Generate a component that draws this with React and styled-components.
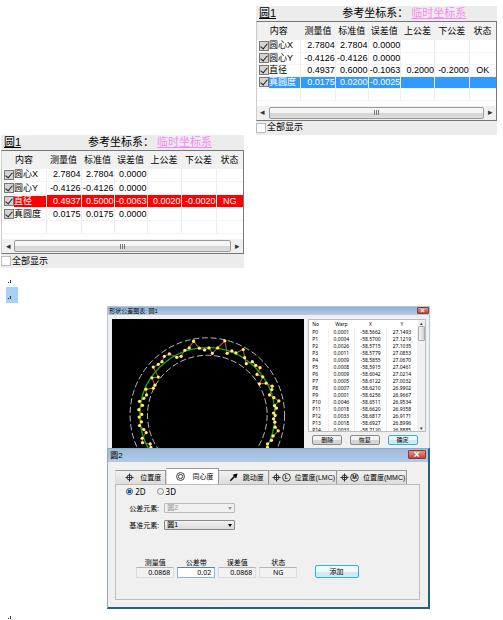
import React, { useState } from "react";
import styled, { createGlobalStyle, css } from "styled-components";

const columns = ["内容", "测量值", "标准值", "误差值", "上公差", "下公差", "状态"];

const firstRows = [
    ["圆心X", "2.7804", "2.7804", "0.0000", "", "", ""],
    ["圆心Y", "-0.4126", "-0.4126", "0.0000", "", "", ""],
    ["直径", "0.4937", "0.6000", "-0.1063", "0.2000", "-0.2000", "OK"],
    ["真圆度", "0.0175", "0.0200", "-0.0025", "", "", ""],
];

const secondRows = [
    ["圆心X", "2.7804", "2.7804", "0.0000", "", "", ""],
    ["圆心Y", "-0.4126", "-0.4126", "0.0000", "", "", ""],
    ["直径", "0.4937", "0.5000", "-0.0063", "0.0020", "-0.0020", "NG"],
    ["真圆度", "0.0175", "0.0175", "0.0000", "", "", ""],
];

const warpRows = [
    ["P0", "0.0001", "-58.5662", "27.1493"],
    ["P1", "0.0004", "-58.5700", "27.1219"],
    ["P2", "0.0026", "-58.5715", "27.1035"],
    ["P3", "0.0011", "-58.5779", "27.0853"],
    ["P4", "0.0009", "-58.5855", "27.0670"],
    ["P5", "0.0008", "-58.5915", "27.0461"],
    ["P6", "0.0009", "-58.6042", "27.0214"],
    ["P7", "0.0005", "-58.6122", "27.0032"],
    ["P8", "0.0007", "-58.6210", "26.9902"],
    ["P9", "0.0001", "-58.6256", "26.9667"],
    ["P10", "0.0046", "-58.6511", "26.9534"],
    ["P11", "0.0018", "-58.6620", "26.9358"],
    ["P12", "0.0033", "-58.6817", "26.9171"],
    ["P13", "0.0018", "-58.6927", "26.8996"],
    ["P14", "0.0033", "-58.7120", "26.8885"],
];

const points = [
    [155, 442], [153, 432], [130, 428], [129, 415], [141, 398], [134, 389], [121, 377], [127, 366],
    [120, 352], [128, 344], [119, 330], [130, 317], [121, 305], [134, 296], [142, 286], [140, 269],
    [162, 266], [167, 257], [158, 235], [177, 233], [162, 203], [177, 195], [188, 187], [195, 171],
    [210, 164], [232, 174], [245, 171], [256, 153], [269, 146], [282, 126], [299, 147], [315, 152],
    [328, 146], [338, 162], [354, 146], [375, 125], [382, 162], [396, 155], [408, 161], [430, 151],
    [434, 175], [439, 193], [457, 187], [467, 198], [480, 205], [471, 225], [488, 232], [478, 253],
    [498, 251], [516, 260], [515, 270], [508, 286], [521, 294], [536, 304], [523, 318], [529, 325],
    [520, 340], [525, 347], [520, 357], [524, 367], [525, 382], [534, 393], [519, 408], [514, 421],
    [502, 432], [502, 442],
];

const tabs = [
    { label: "位置度", icons: ["position"], share: 51 },
    { label: "同心度", icons: ["concentric"], share: 52 },
    { label: "跳动度", icons: ["runout"], share: 50 },
    { label: "位置度(LMC)", icons: ["position", "L"], share: 68 },
    { label: "位置度(MMC)", icons: ["position", "M"], share: 70 },
];

const TabIcon = ({ kind }) => (
    <Icon viewBox="0 0 10 10" aria-hidden="true">
        {kind === "position" && (
            <g fill="none" stroke="#222">
                <circle cx="5" cy="5" r="2.8" />
                <path d="M5 0.5v9M0.5 5h9" />
            </g>
        )}
        {kind === "concentric" && (
            <g fill="none" stroke="#333">
                <circle cx="5" cy="5" r="4.4" />
                <circle cx="5" cy="5" r="2.4" />
            </g>
        )}
        {kind === "runout" && (
            <g>
                <path d="M1.5 8.5L6 4" stroke="#000" strokeWidth="1.6" />
                <path d="M9.5 0.5L8 6L4 2z" fill="#000" />
            </g>
        )}
        {(kind === "L" || kind === "M") && (
            <g>
                <circle cx="5" cy="5" r="4.3" fill="none" stroke="#000" strokeWidth="0.8" />
                <text x="5" y="7.2" textAnchor="middle" fontSize="6" fontWeight="bold" fontFamily="Liberation Sans, sans-serif">{kind}</text>
            </g>
        )}
    </Icon>
);

const Mark = () => (
    <MarkSvg viewBox="0 0 5 5" aria-hidden="true">
        <path d="M1 3.5h1M3.5 1v3" stroke="#333" />
    </MarkSvg>
);

const ResultPanel = ({ id, rows, active, tone, rowHeight, headHeight, right }) => (
    <Panel $right={right}>
        <PanelTitle>
            <Name>圆1</Name>
            <span>参考坐标系：</span>
            <SystemLink href="#system">临时坐标系</SystemLink>
        </PanelTitle>
        <Frame>
            <Table>
                <colgroup>
                    <Col $share={44} />
                    <Col $share={35} />
                    <Col $share={33} />
                    <Col $share={33} />
                    <Col $share={34} />
                    <Col $share={35} />
                    <Col $share={27} />
                </colgroup>
                <thead>
                    <tr>
                        {columns.map((c) => <Th key={c} $height={headHeight}>{c}</Th>)}
                    </tr>
                </thead>
                <tbody>
                    {rows.map((row, i) => (
                        <Row key={row[0]} $height={rowHeight} $tone={i === active ? tone : null}>
                            <td>
                                <CheckLabel>
                                    <Check type="checkbox" defaultChecked />
                                    <Feature $tone={i === active ? tone : null}>{row[0]}</Feature>
                                </CheckLabel>
                            </td>
                            {row.slice(1).map((v, n) => <td key={n}>{v}</td>)}
                        </Row>
                    ))}
                    <Row $height={rowHeight}>{columns.map((c) => <td key={c} />)}</Row>
                </tbody>
            </Table>
            <ScrollX>
                <ScrollButton type="button" aria-label="left">◂</ScrollButton>
                <ThumbX><i /><i /><i /></ThumbX>
                <ScrollButton type="button" aria-label="right">▸</ScrollButton>
            </ScrollX>
        </Frame>
        <Footer htmlFor={id}>
            <Check id={id} type="checkbox" $plain />
            全部显示
        </Footer>
    </Panel>
);

const ChartWindow = () => (
    <Chart>
        <ChartBar>
            <span>形状公差图表: 圆1</span>
            <Close type="button" aria-label="close" $small>×</Close>
        </ChartBar>
        <ChartBody>
            <Plot viewBox="36 60 578 384" preserveAspectRatio="xMidYMin slice">
                <g fill="none">
                    <circle cx="323" cy="346" r="230" stroke="#ddd" strokeWidth="2.5" strokeDasharray="18 8" />
                    <circle cx="323" cy="346" r="178" stroke="#ddd" strokeWidth="2.5" strokeDasharray="18 8" />
                    <circle cx="323" cy="346" r="201" stroke="#0aa81c" strokeWidth="4" />
                    <polyline points={points.join(" ")} stroke="#c0582c" strokeWidth="3" />
                </g>
                {points.map(([x, y]) => <circle key={x + "-" + y} cx={x} cy={y} r="4.8" fill="#fff06a" />)}
            </Plot>
            <Side>
                <List>
                    <WarpTable>
                        <thead>
                            <tr><th>No</th><th>Warp</th><th>X</th><th>Y</th></tr>
                        </thead>
                        <tbody>
                            {warpRows.map((row) => (
                                <tr key={row[0]}>{row.map((v) => <td key={v}>{v}</td>)}</tr>
                            ))}
                        </tbody>
                    </WarpTable>
                    <ScrollY>
                        <ScrollButton type="button" aria-label="up" $tiny>▴</ScrollButton>
                        <ThumbY />
                        <ScrollButton type="button" aria-label="down" $tiny>▾</ScrollButton>
                    </ScrollY>
                </List>
                <Actions>
                    <Button type="button">删除</Button>
                    <Button type="button">恢复</Button>
                    <Button type="button" $primary>确定</Button>
                </Actions>
            </Side>
        </ChartBody>
    </Chart>
);

const ToleranceWindow = () => {
    const [tab, setTab] = useState(1);
    return (
        <Dialog>
            <DialogBar>
                <span>圆2</span>
                <Close type="button" aria-label="close">×</Close>
            </DialogBar>
            <DialogBody>
                <Tabs role="tablist">
                    {tabs.map((t, i) => (
                        <Tab key={t.label} type="button" role="tab" aria-selected={i === tab} $active={i === tab} $share={t.share} $wide={t.icons.length > 1} onClick={() => setTab(i)}>
                            <Icons>{t.icons.map((k) => <TabIcon key={k} kind={k} />)}</Icons>
                            {t.label}
                        </Tab>
                    ))}
                </Tabs>
                <TabPage>
                    <Radios>
                        <label><Radio type="radio" name="dim" defaultChecked />2D</label>
                        <label><Radio type="radio" name="dim" />3D</label>
                    </Radios>
                    <Line>
                        <label htmlFor="target">公差元素:</label>
                        <SelectBox $disabled>
                            <Select id="target" disabled><option>圆2</option></Select>
                        </SelectBox>
                    </Line>
                    <Line>
                        <label htmlFor="datum">基准元素:</label>
                        <SelectBox>
                            <Select id="datum"><option>圆1</option></Select>
                        </SelectBox>
                    </Line>
                    <Results>
                        <Field>测量值<Value readOnly value="0.0868" /></Field>
                        <Field>公差带<Value $edit defaultValue="0.02" /></Field>
                        <Field>误差值<Value readOnly value="0.0868" /></Field>
                        <Field>状态<Value $center readOnly value="NG" /></Field>
                        <Button type="button" $primary $large>添加</Button>
                    </Results>
                </TabPage>
            </DialogBody>
        </Dialog>
    );
};

const App = () => {
    return (
        <Page>
            <GlobalStyle />
            <ResultPanel id="all-1" rows={firstRows} active={3} tone="#3399ff" rowHeight={12} headHeight={18} right />
            <ResultPanel id="all-2" rows={secondRows} active={2} tone="#ff0000" rowHeight={13} headHeight={18} />
            <Paragraph><Mark /></Paragraph>
            <Selected><Mark /></Selected>
            <Figure>
                <ChartWindow />
                <ToleranceWindow />
            </Figure>
            <Paragraph $tight><Mark /></Paragraph>
        </Page>
    );
};

export default App;

const GlobalStyle = createGlobalStyle`
* {
    box-sizing: border-box;
}
body {
    margin: 0;
    background: #fff;
    color: #000;
    font-family: "Liberation Sans", "Noto Sans CJK SC", sans-serif;
}
button, input, select {
    font: inherit;
    color: inherit;
    margin: 0;
    padding: 0;
}
`;

const Page = styled.main`
display: flex;
flex-direction: column;
padding: 6px 6px 0 1px;
`;

const Panel = styled.section`
width: ${(p) => (p.$right ? "calc(49% - 2px)" : "49%")};
align-self: ${(p) => (p.$right ? "flex-end" : "flex-start")};
background: #ececec;
`;

const PanelTitle = styled.header`
display: flex;
height: 15px;
padding-left: 3px;
font-size: 11px;
line-height: 14px;
white-space: nowrap;
`;

const Name = styled.span`
flex: 0 0 35%;
text-decoration: underline;
`;

const SystemLink = styled.a`
color: #f78af2;
margin-left: 3px;
`;

const Frame = styled.div`
border: 1px solid #777;
border-left-color: #ccc;
background: #fff;
`;

const Table = styled.table`
width: 100%;
table-layout: fixed;
border-collapse: collapse;
font-size: 9px;
white-space: nowrap;
`;

const Col = styled.col`
width: ${(p) => (p.$share / 241) * 100}%;
`;

const Th = styled.th`
height: ${(p) => p.$height}px;
padding: 0;
background: #f1f1f1;
font-weight: normal;
line-height: 12px;
`;

const Row = styled.tr`
background: ${(p) => p.$tone || "#fff"};
color: ${(p) => (p.$tone ? "#fff" : "#000")};

td {
    height: ${(p) => p.$height}px;
    padding: 0;
    border-right: 1px solid #ededed;
    border-bottom: 1px solid #f3f3f3;
    line-height: 11px;
    text-align: right;
}
td:first-child {
    background: #fff;
    text-align: left;
}
td:last-child {
    text-align: center;
    border-right: 0;
}
`;

const CheckLabel = styled.label`
display: flex;
align-items: center;
padding-left: 2px;
`;

const Feature = styled.span`
flex: 1;
background: ${(p) => p.$tone || "transparent"};
`;

const Check = styled.input`
appearance: none;
flex: none;
display: grid;
place-items: center;
width: 10px;
height: 10px;
border: 1px solid ${(p) => (p.$plain ? "#bbb" : "#777")};
background: ${(p) => (p.$plain ? "#fff" : "#d4d4d4")};

&:checked::after {
    content: "";
    width: 3px;
    height: 6px;
    margin-bottom: 2px;
    border: solid #222;
    border-width: 0 1px 1px 0;
    transform: rotate(40deg);
}
`;

const ScrollX = styled.div`
display: flex;
height: 14px;
margin-top: 5px;
padding: 1px 0;
background: #f0f0f0;
`;

const ScrollButton = styled.button`
flex: none;
width: ${(p) => (p.$tiny ? "auto" : "12px")};
border: 0;
background: transparent;
color: #333;
font-size: ${(p) => (p.$tiny ? 5 : 9)}px;
line-height: ${(p) => (p.$tiny ? 6 : 11)}px;
`;

const ThumbX = styled.div`
flex: 1;
display: flex;
justify-content: center;
align-items: center;
gap: 1px;
border: 1px solid #999;
border-radius: 2px;
background: linear-gradient(#f6f6f6 45%, #d6d6d6 55%, #dedede);

i {
    width: 1px;
    height: 5px;
    background: #777;
}
`;

const Footer = styled.label`
display: flex;
align-items: center;
gap: 1px;
height: 14px;
font-size: 9px;
line-height: 13px;
`;

const MarkSvg = styled.svg`
display: block;
width: 5px;
height: 5px;
`;

const Paragraph = styled.div`
padding: ${(p) => (p.$tight ? 6 : 11)}px 0 0 6px;
`;

const Selected = styled.div`
display: flex;
align-items: flex-end;
align-self: flex-start;
width: 12px;
height: 16px;
margin: 3px 0 3px 5px;
padding: 0 0 3px 1px;
background: #a6d0f5;
`;

const Figure = styled.figure`
width: 65%;
margin: 0 0 0 calc(21% + 2px);
`;

const Chart = styled.section`
border: 1px solid #b4c6db;
border-bottom: 0;
background: #f0f0f0;
`;

const ChartBar = styled.header`
display: flex;
justify-content: space-between;
height: 8px;
padding-left: 1px;
background: linear-gradient(#8fb0d5, #b5cbe5);
font-size: 6px;
line-height: 8px;
`;

const Close = styled.button`
width: ${(p) => (p.$small ? 12 : 18)}px;
height: ${(p) => (p.$small ? 7 : 9)}px;
border: 1px solid #8d3b32;
border-radius: 1px;
background: linear-gradient(#e29a8b, #c4412c);
color: #fff;
font-size: ${(p) => (p.$small ? 7 : 10)}px;
font-weight: bold;
line-height: ${(p) => (p.$small ? 4 : 6)}px;
`;

const ChartBody = styled.div`
display: flex;
align-items: flex-start;
gap: 4px;
padding: 4px 3px 0 4px;
`;

const Plot = styled.svg`
display: block;
flex: 193;
min-width: 0;
height: 129px;
background: #000;
`;

const Side = styled.div`
flex: 118;
min-width: 0;
`;

const List = styled.div`
display: flex;
height: 113px;
border: 1px solid #bbb;
background: #fff;
overflow: hidden;
`;

const WarpTable = styled.table`
flex: 1;
align-self: flex-start;
border-collapse: collapse;
table-layout: fixed;
font-family: "Noto Sans", sans-serif;
font-size: 5px;
line-height: 7px;

th {
    height: 9px;
    padding: 0;
    font-weight: normal;
}
td {
    height: 7px;
    padding: 0;
    text-align: center;
    border-right: 1px solid #f0f0f0;
}
th:first-child, td:first-child {
    width: 18%;
    padding-left: 3px;
    text-align: left;
}
`;

const ScrollY = styled.div`
display: flex;
flex-direction: column;
width: 7px;
background: #f0f0f0;

button:last-child {
    margin-top: auto;
}
`;

const ThumbY = styled.div`
height: 15px;
border: 1px solid #aaa;
border-radius: 1px;
background: linear-gradient(90deg, #f6f6f6, #d2d2d2);
`;

const Actions = styled.div`
display: flex;
justify-content: space-between;
padding: 3px 8px 3px 4px;
`;

const Button = styled.button`
width: 30px;
height: 10px;
border: 1px solid #8a8a8a;
border-radius: 2px;
background: linear-gradient(#f3f3f3 50%, #d5d5d5 50%);
font-size: 6px;
line-height: 7px;

${(p) => p.$primary && css`
    border-color: #2fb0e0;
    background: linear-gradient(#eef8fd 50%, #cfeaf7 50%);
`}
${(p) => p.$large && css`
    width: 44px;
    height: 13px;
    margin-left: auto;
    font-size: 7px;
    line-height: 10px;
`}
`;

const Dialog = styled.section`
border: 1px solid #8fa9c6;
border-right: 2px solid #276079;
border-bottom: 2px solid #276079;
background: #a9c6e6;
`;

const DialogBar = styled.header`
display: flex;
justify-content: space-between;
height: 13px;
padding: 1px 2px 0 2px;
background: linear-gradient(#9dbbdd, #b2cbe7);
font-size: 8px;
line-height: 11px;
`;

const DialogBody = styled.div`
padding: 6px 8px 7px 7px;
background: #f0f0f0;
`;

const Tabs = styled.div`
display: flex;
align-items: flex-end;
width: 96%;
`;

const Tab = styled.button`
flex: none;
width: ${(p) => (p.$share / 291) * 100}%;
display: flex;
align-items: center;
justify-content: space-between;
height: ${(p) => (p.$active ? 16 : 14)}px;
padding: 0 ${(p) => (p.$wide ? "1px 0 2px" : "4px 0 9px")};
border: 1px solid #999;
border-left-color: #ddd;
border-bottom: 0;
background: ${(p) => (p.$active ? "#fff" : "linear-gradient(#f2f2f2, #dcdcdc)")};
font-size: 7px;
line-height: 10px;
white-space: nowrap;
`;

const Icons = styled.span`
display: flex;
gap: 1px;
`;

const Icon = styled.svg`
display: block;
width: 9px;
height: 9px;
`;

const TabPage = styled.div`
padding: 2px 8px 21px 10px;
border: 1px solid #bdbdbd;
font-size: 7px;
line-height: 9px;
`;

const Radios = styled.div`
display: flex;
gap: 11px;
margin-bottom: 7px;
font-family: "Noto Sans", sans-serif;

label {
    display: flex;
    align-items: center;
    gap: 2px;
    font-size: 8px;
}
`;

const Radio = styled.input`
appearance: none;
width: 7px;
height: 7px;
border: 1px solid #888;
border-radius: 50%;
background: #eee;

&:checked {
    border-color: #456;
    background: radial-gradient(circle, #0f5fa8 40%, #cfe6f5 60%);
}
`;

const Line = styled.div`
display: flex;
align-items: center;
margin: 0 0 7px 3px;

label {
    width: 35px;
    white-space: nowrap;
}
`;

const SelectBox = styled.div`
position: relative;
width: 25%;
color: ${(p) => (p.$disabled ? "#999" : "#000")};

&::after {
    content: "";
    position: absolute;
    right: 3px;
    top: 4px;
    border: 2px solid transparent;
    border-top: 3px solid currentColor;
    pointer-events: none;
}
`;

const Select = styled.select`
appearance: none;
display: block;
width: 100%;
height: 10px;
padding-left: 2px;
border: 1px solid #888;
border-radius: 1px;
background: linear-gradient(#f2f2f2, #dadada);
line-height: 8px;
opacity: 1;

&:disabled {
    border-color: #bbb;
    background: #f0f0f0;
}
`;

const Results = styled.div`
display: flex;
align-items: flex-end;
gap: 3px;
padding: 21px 52px 0 10px;
`;

const Field = styled.label`
width: 38px;
text-align: center;
`;

const Value = styled.input`
display: block;
width: 100%;
height: 11px;
padding: 0 3px;
border: 1px solid ${(p) => (p.$edit ? "#86b7e0" : "#dcdcdc")};
border-top-color: ${(p) => (p.$edit ? "#4c84b8" : "#b5b5b5")};
background: ${(p) => (p.$edit ? "#fff" : "#f2f2f2")};
font-family: "Noto Sans", sans-serif;
text-align: ${(p) => (p.$center ? "center" : "right")};
`;
